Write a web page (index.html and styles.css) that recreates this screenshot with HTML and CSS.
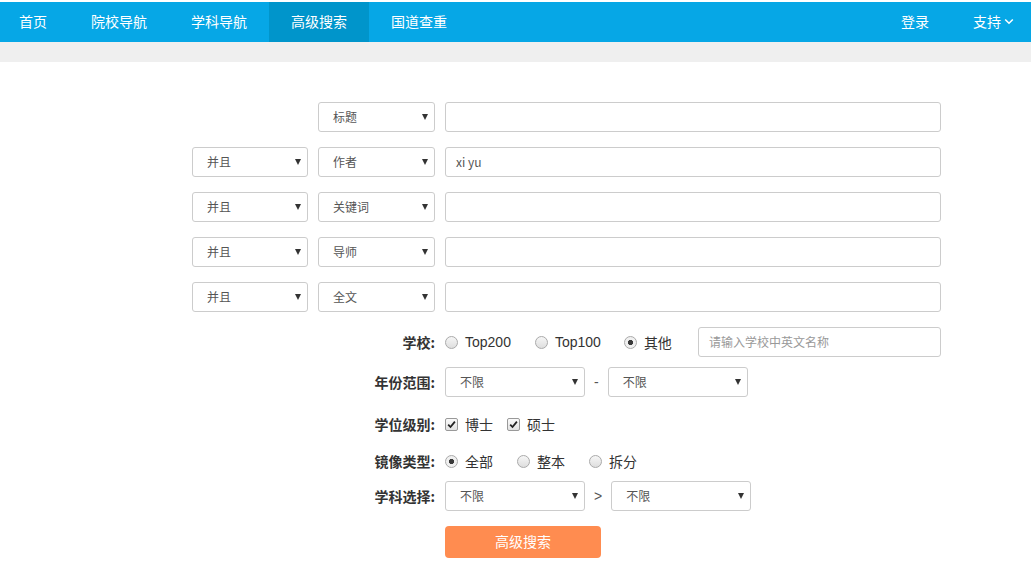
FILE: index.html
```html
<!DOCTYPE html>
<html lang="zh-CN">
<head>
<meta charset="utf-8">
<title>高级搜索</title>
<link rel="stylesheet" href="styles.css">
</head>
<body>
<header class="topbar">
  <nav class="nav">
    <div class="nav-left">
      <a class="nav-item first">首页</a>
      <a class="nav-item">院校导航</a>
      <a class="nav-item">学科导航</a>
      <a class="nav-item active">高级搜索</a>
      <a class="nav-item">国道查重</a>
    </div>
    <div class="nav-right">
      <a class="nav-item">登录</a>
      <a class="nav-item support">支持<svg class="chev" width="10" height="7" viewBox="0 0 10 7"><path d="M1.2 1.5 L5 5.2 L8.8 1.5" fill="none" stroke="#fff" stroke-width="1.6"/></svg></a>
    </div>
  </nav>
</header>
<div class="band"></div>

<main class="search">
  <div class="cond-row">
    <div class="spacer"></div>
    <div class="sel w117"><span>标题</span><i class="caret"></i></div>
    <div class="txt"></div>
  </div>
  <div class="cond-row">
    <div class="sel w116"><span>并且</span><i class="caret"></i></div>
    <div class="sel w117"><span>作者</span><i class="caret"></i></div>
    <div class="txt"><span class="val">xi yu</span></div>
  </div>
  <div class="cond-row">
    <div class="sel w116"><span>并且</span><i class="caret"></i></div>
    <div class="sel w117"><span>关键词</span><i class="caret"></i></div>
    <div class="txt"></div>
  </div>
  <div class="cond-row">
    <div class="sel w116"><span>并且</span><i class="caret"></i></div>
    <div class="sel w117"><span>导师</span><i class="caret"></i></div>
    <div class="txt"></div>
  </div>
  <div class="cond-row">
    <div class="sel w116"><span>并且</span><i class="caret"></i></div>
    <div class="sel w117"><span>全文</span><i class="caret"></i></div>
    <div class="txt"></div>
  </div>

  <div class="opt-row school">
    <label class="lbl">学校:</label>
    <div class="opts">
      <span class="radio"></span><span class="otext">Top200</span>
      <span class="radio sp"></span><span class="otext">Top100</span>
      <span class="radio on sp"></span><span class="otext">其他</span>
      <div class="txt school-input"><span class="ph">请输入学校中英文名称</span></div>
    </div>
  </div>

  <div class="opt-row year">
    <label class="lbl">年份范围:</label>
    <div class="opts">
      <div class="sel w140"><span>不限</span><i class="caret"></i></div>
      <span class="sep">-</span>
      <div class="sel w140"><span>不限</span><i class="caret"></i></div>
    </div>
  </div>

  <div class="opt-row degree">
    <label class="lbl">学位级别:</label>
    <div class="opts">
      <span class="check"><svg width="9" height="9" viewBox="0 0 9 9"><path d="M1.2 4.6 L3.5 7 L7.9 1.6" fill="none" stroke="#222" stroke-width="1.8"/></svg></span><span class="otext">博士</span>
      <span class="check sp2"><svg width="9" height="9" viewBox="0 0 9 9"><path d="M1.2 4.6 L3.5 7 L7.9 1.6" fill="none" stroke="#222" stroke-width="1.8"/></svg></span><span class="otext">硕士</span>
    </div>
  </div>

  <div class="opt-row mirror">
    <label class="lbl">镜像类型:</label>
    <div class="opts">
      <span class="radio on"></span><span class="otext">全部</span>
      <span class="radio sp"></span><span class="otext">整本</span>
      <span class="radio sp"></span><span class="otext">拆分</span>
    </div>
  </div>

  <div class="opt-row subject">
    <label class="lbl">学科选择:</label>
    <div class="opts">
      <div class="sel w140"><span>不限</span><i class="caret"></i></div>
      <span class="sep gt">&gt;</span>
      <div class="sel w140"><span>不限</span><i class="caret"></i></div>
    </div>
  </div>

  <div class="opt-row submit">
    <div class="lbl"></div>
    <div class="opts">
      <button class="btn">高级搜索</button>
    </div>
  </div>
</main>
</body>
</html>
```

FILE: styles.css
```css
* { box-sizing: border-box; }
html, body { margin: 0; padding: 0; background: #fff; }
body {
  font-family: "Liberation Sans", "Noto Sans CJK SC", sans-serif;
  color: #333;
  padding-top: 2px;
}
.topbar { background: #06a7e6; height: 40px; }
.nav { display: flex; justify-content: space-between; height: 40px; }
.nav-left, .nav-right { display: flex; height: 40px; }
.nav-item {
  display: flex; align-items: center;
  height: 40px; padding: 0 22px 3px;
  color: #fff; font-size: 14px; text-decoration: none; white-space: nowrap;
  font-family: "Noto Sans CJK SC", sans-serif;
}
.nav-item.first { padding-left: 19px; }
.nav-item.active { background: #0095cb; }
.nav-item.support { padding-left: 22px; padding-right: 17px; }
.chev { margin-left: 3px; margin-top: 2px; }
.band { height: 20px; background: #efefef; }

.search { padding: 40px 0 0 192px; width: 960px; }
.cond-row { display: flex; gap: 10px; height: 30px; margin-bottom: 15px; }
.spacer { width: 116px; flex-shrink: 0; }
.sel {
  display: flex; align-items: center; justify-content: space-between; flex-shrink: 0;
  height: 30px; border: 1px solid #ccc; border-radius: 3px;
  padding: 0 6px 1px 14px; background: #fff;
  font-family: "Noto Sans CJK SC", sans-serif; font-size: 12px; color: #555;
}
.w116 { width: 116px; }
.w117 { width: 117px; }
.w140 { width: 140px; }
.caret {
  width: 0; height: 0;
  border-left: 3.5px solid transparent; border-right: 3.5px solid transparent;
  border-top: 6px solid #333;
}
.txt {
  display: flex; align-items: center; flex-shrink: 0;
  width: 496px; height: 30px; border: 1px solid #ccc; border-radius: 3px;
  padding: 0 10px 2px; background: #fff;
  font-family: "Noto Sans CJK SC", sans-serif; font-size: 12px; color: #555;
}
.ph { color: #999; }

.opt-row { display: flex; gap: 10px; align-items: center; height: 30px; }
.lbl {
  width: 243px; flex-shrink: 0; text-align: right;
  font-family: "Noto Sans CJK SC", sans-serif; font-weight: bold; font-size: 14px; color: #333;
}
.opts { display: flex; align-items: center; font-size: 14px; color: #333; white-space: nowrap; }
.otext { margin-left: 7px; white-space: nowrap; font-family: "Liberation Sans", "Noto Sans CJK SC", sans-serif; }
.radio {
  width: 13px; height: 13px; border-radius: 50%; flex-shrink: 0;
  border: 1px solid #aaa;
  background: linear-gradient(#f6f6f6, #dedede);
}
.radio.on { background: radial-gradient(circle, #3a3a3a 0 2.3px, #f0f0f0 2.9px); }
.radio.sp { margin-left: 24px; }
.school .radio.on.sp { margin-left: 23px; }
.check {
  display: flex; align-items: center; justify-content: center; flex-shrink: 0;
  width: 13px; height: 13px; border-radius: 2px;
  border: 1px solid #999;
  background: linear-gradient(#fafafa, #e2e2e2);
}
.check.sp2 { margin-left: 14px; }
.school-input { width: 243px; margin-left: 26px; }
.year { margin-top: 10px; }
.degree { margin-top: 12px; }
.mirror { margin-top: 7px; }
.subject { margin-top: 5px; }
.sep { margin: 0 9px; color: #555; font-size: 14px; }
.submit { margin-top: 15px; height: 32px; }
.btn {
  width: 156px; height: 32px; border: 0; border-radius: 4px; padding: 0 0 2px;
  background: #ff8c50; color: #fff; font-size: 14px;
  font-family: "Noto Sans CJK SC", sans-serif;
}
```
